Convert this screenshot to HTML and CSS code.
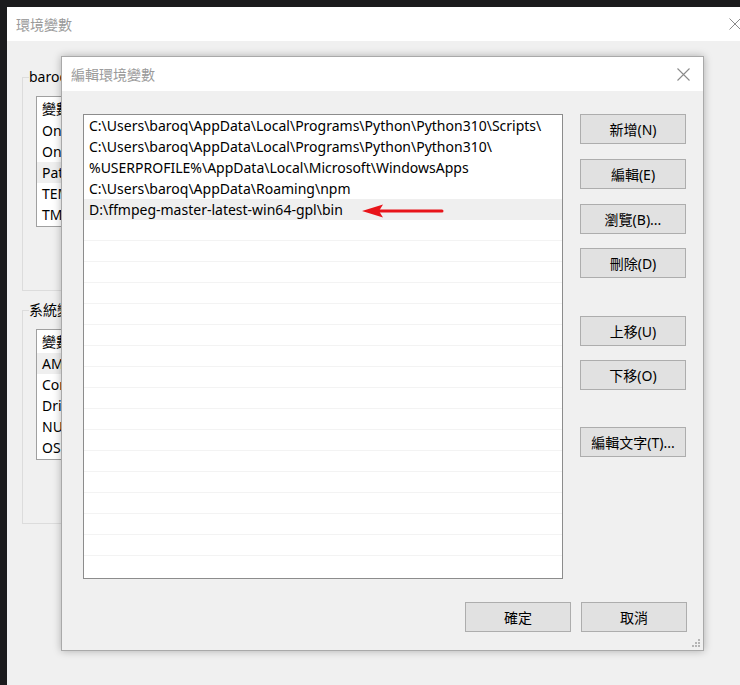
FILE: index.html
```html
<!DOCTYPE html>
<html lang="zh-Hant">
<head>
<meta charset="utf-8">
<title>編輯環境變數</title>
<link rel="stylesheet" href="styles.css">
</head>
<body>
<div class="desktop">
  <div class="win bg-win">
    <div class="titlebar bg-title">
      <span class="title">環境變數</span>
      <svg class="close bg-close" width="12" height="12" viewBox="0 0 12 12"><path d="M0.5 0.5 L11.5 11.5 M11.5 0.5 L0.5 11.5" stroke="#8a8a8a" stroke-width="1" fill="none"/></svg>
    </div>
    <div class="bg-body">
      <fieldset class="group">
        <legend>baroq 的使用者變數(U)</legend>
        <div class="mini-list">
          <div class="mini-head">變數</div>
          <div class="mini-row">OneDrive</div>
          <div class="mini-row">OneDriveConsumer</div>
          <div class="mini-row sel">Path</div>
          <div class="mini-row">TEMP</div>
          <div class="mini-row">TMP</div>
        </div>
      </fieldset>
      <fieldset class="group">
        <legend>系統變數(S)</legend>
        <div class="mini-list">
          <div class="mini-head">變數</div>
          <div class="mini-row sel">AMDRMPATH</div>
          <div class="mini-row">ComSpec</div>
          <div class="mini-row">DriverData</div>
          <div class="mini-row">NUMBER_OF_PROCESSORS</div>
          <div class="mini-row">OS</div>
        </div>
      </fieldset>
    </div>
  </div>

  <div class="win dialog">
    <div class="titlebar dlg-title">
      <span class="title">編輯環境變數</span>
      <svg class="close" width="13" height="13" viewBox="0 0 13 13"><path d="M0.5 0.5 L12.5 12.5 M12.5 0.5 L0.5 12.5" stroke="#8a8a8a" stroke-width="1.1" fill="none"/></svg>
    </div>
    <div class="dlg-body">
      <div class="dlg-main">
        <div class="path-list">
          <div class="row">C:\Users\baroq\AppData\Local\Programs\Python\Python310\Scripts\</div>
          <div class="row">C:\Users\baroq\AppData\Local\Programs\Python\Python310\</div>
          <div class="row">%USERPROFILE%\AppData\Local\Microsoft\WindowsApps</div>
          <div class="row">C:\Users\baroq\AppData\Roaming\npm</div>
          <div class="row sel">D:\ffmpeg-master-latest-win64-gpl\bin</div>
          <div class="row empty"></div><div class="row empty"></div><div class="row empty"></div>
          <div class="row empty"></div><div class="row empty"></div><div class="row empty"></div>
          <div class="row empty"></div><div class="row empty"></div><div class="row empty"></div>
          <div class="row empty"></div><div class="row empty"></div><div class="row empty"></div>
          <div class="row empty"></div><div class="row empty"></div><div class="row empty"></div>
          <div class="row empty"></div><div class="row empty last"></div>
          <svg class="arrow" width="84" height="16" viewBox="0 0 84 16"><path d="M14 8 L80 8" stroke="#e8141a" stroke-width="3" stroke-linecap="round"/><polygon points="0,8 21,1.5 17,8 21,14.5" fill="#e8141a"/></svg>
        </div>
        <div class="side-buttons">
          <button class="btn">新增(N)</button>
          <button class="btn">編輯(E)</button>
          <button class="btn">瀏覽(B)...</button>
          <button class="btn tight">刪除(D)</button>
          <button class="btn far">上移(U)</button>
          <button class="btn tight">下移(O)</button>
          <button class="btn far2">編輯文字(T)...</button>
        </div>
      </div>
      <div class="dlg-footer">
        <button class="btn">確定</button>
        <button class="btn">取消</button>
      </div>
    </div>
    <svg class="grip" width="8" height="8" viewBox="0 0 8 8"><g fill="#b5b5b5"><rect x="6" y="0" width="2" height="2"/><rect x="3" y="3" width="2" height="2"/><rect x="6" y="3" width="2" height="2"/><rect x="0" y="6" width="2" height="2"/><rect x="3" y="6" width="2" height="2"/><rect x="6" y="6" width="2" height="2"/></g></svg>
  </div>
</div>
</body>
</html>
```

FILE: styles.css
```css
html, body {
  margin: 0;
  padding: 0;
}
body {
  font-family: "Noto Sans", "Noto Sans CJK TC", sans-serif;
  font-size: 14px;
  color: #000;
}
.desktop {
  position: relative;
  width: 740px;
  height: 685px;
  overflow: hidden;
  background: #1b1b1d;
}
.win {
  position: absolute;
  box-sizing: border-box;
  background: #f0f0f0;
}
.bg-win {
  left: 7px;
  top: 7px;
  width: 780px;
  height: 700px;
}
.titlebar {
  display: flex;
  align-items: center;
  justify-content: space-between;
  background: #fff;
  box-sizing: border-box;
}
.title {
  font-family: "Noto Sans CJK TC", sans-serif;
  font-size: 14px;
  color: #9a9a9a;
}
.bg-title {
  height: 34px;
  padding: 0 0 0 9px;
}
.bg-close {
  margin-right: 46px;
}
.bg-body {
  display: flex;
  flex-direction: column;
  gap: 9px;
  width: 54px;
  overflow: hidden;
  padding: 26px 0 0 15px;
  box-sizing: border-box;
}
.group {
  box-sizing: border-box;
  flex: none;
  width: 320px;
  height: 224px;
  margin: 0;
  padding: 0 13px;
  border: 1px solid #dcdcdc;
}
.group legend {
  padding: 0 3px 0 0;
  margin-left: -7px;
  font-family: "Noto Sans", "Noto Sans CJK TC", sans-serif;
  font-size: 14px;
  line-height: 20px;
  color: #000;
  white-space: nowrap;
}
.mini-list {
  margin-top: 9px;
  height: 131px;
  box-sizing: border-box;
  background: #fff;
  border: 1px solid #a0a0a0;
}
.mini-head {
  height: 23px;
  line-height: 23px;
  padding-left: 5px;
  font-family: "Noto Sans CJK TC", sans-serif;
}
.mini-row {
  height: 21px;
  line-height: 21px;
  padding-left: 5px;
  white-space: nowrap;
}
.mini-row.sel {
  background: #efefef;
}

.dialog {
  left: 61px;
  top: 56px;
  width: 643px;
  height: 595px;
  border: 1px solid #a9a9a9;
  box-shadow: 0 0 8px rgba(0, 0, 0, 0.28);
  display: flex;
  flex-direction: column;
}
.dlg-title {
  height: 34px;
  padding: 0 13px 0 9px;
  flex: none;
}
.dlg-body {
  flex: 1;
  display: flex;
  flex-direction: column;
  padding: 23px 16px 0 21px;
}
.dlg-main {
  display: flex;
  gap: 17px;
}
.path-list {
  position: relative;
  box-sizing: border-box;
  width: 480px;
  height: 465px;
  background: #fff;
  border: 1px solid #8c8c8c;
  overflow: hidden;
}
.row {
  height: 21px;
  line-height: 21px;
  padding-left: 5px;
  white-space: nowrap;
  box-sizing: border-box;
}
.row.sel {
  background: #efefef;
}
.row.empty {
  border-bottom: 1px solid #f3f3f3;
}
.row.empty.last {
  border-bottom: 0;
}
.arrow {
  position: absolute;
  left: 278px;
  top: 88px;
}
.side-buttons {
  display: flex;
  flex-direction: column;
}
.btn {
  box-sizing: border-box;
  width: 106px;
  height: 30px;
  margin: 0;
  padding: 0;
  background: #e1e1e1;
  border: 1px solid #adadad;
  border-radius: 0;
  font-family: "Noto Sans", "Noto Sans CJK TC", sans-serif;
  font-size: 14px;
  color: #000;
}
.side-buttons .btn + .btn {
  margin-top: 15px;
}
.side-buttons .btn.tight {
  margin-top: 14px;
}
.side-buttons .btn.far {
  margin-top: 38px;
}
.side-buttons .btn.far2 {
  margin-top: 37px;
}
.dlg-footer {
  display: flex;
  justify-content: flex-end;
  gap: 10px;
  margin-top: 23px;
}
.grip {
  position: absolute;
  right: 3px;
  bottom: 3px;
}
```
